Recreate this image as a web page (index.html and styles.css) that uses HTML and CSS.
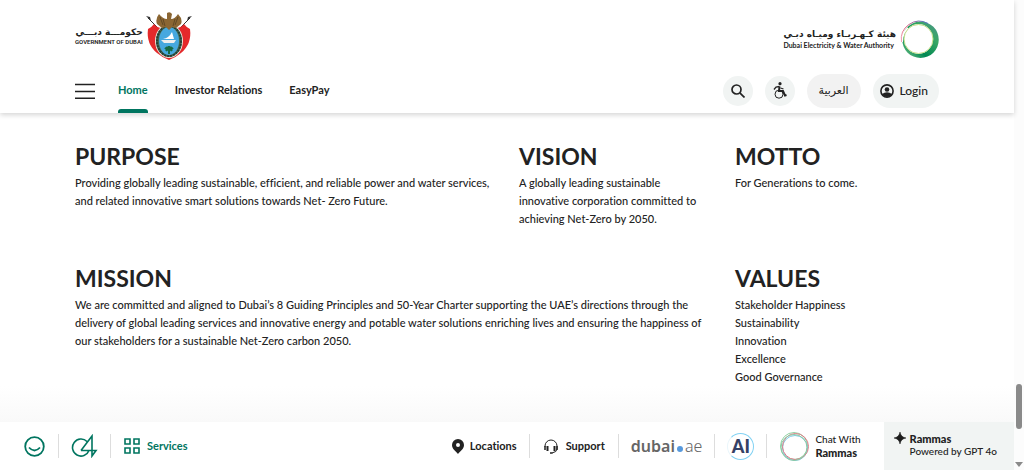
FILE: index.html
```html
<!DOCTYPE html>
<html lang="en">
<head>
<meta charset="utf-8">
<meta name="viewport" content="width=device-width, initial-scale=1">
<title>Dubai Electricity &amp; Water Authority</title>
<link rel="stylesheet" href="styles.css">
</head>
<body>
<div class="page">
  <div class="view">
    <header class="header">
      <div class="brands">
        <a class="brand" href="#">
          <span class="gov-text"><span class="gov-ar" lang="ar" dir="rtl">حكومـــة دبـــي</span><span class="gov-en">GOVERNMENT OF DUBAI</span></span>
          <svg class="crest" width="46" height="48" viewBox="0 0 46 48" aria-hidden="true">
            <path d="M2 6 13 17M44 6 33 17" stroke="#333" stroke-width="1"/>
            <path d="M0 4l4 1 1 4zM46 4l-4 1-1 4z" fill="#333"/>
            <path d="M2 17q3-1 6-5 3 4 8 4h14q5 0 8-4 3 4 6 5 2 15-9 24-6 5-12 7-6-2-12-7Q0 32 2 17z" fill="#e4292b"/>
            <ellipse cx="23" cy="29" rx="14" ry="17" fill="#e9e2d8"/>
            <ellipse cx="23" cy="29" rx="13" ry="16" fill="#426b54"/>
            <ellipse cx="23" cy="29" rx="12" ry="15" fill="none" stroke="#253d36" stroke-width="2" stroke-dasharray="2 1"/>
            <ellipse cx="23" cy="29" rx="10" ry="14" fill="#46a8df"/>
            <path d="M17 27q6-1 9-7l2 7z" fill="#fff"/><path d="M15 28h15l-2 3H18z" fill="#eee"/>
            <path d="M23 34v8M19 37q4-4 8 0M20 39q3-4 6 0" stroke="#176b45" stroke-width="2" fill="none"/>
            <path d="M21 1q3-2 5 1l-1 5q4 0 7-5 5 5 3 10l-5 4-4-1-3 3-3-3-4 1-5-4q-2-5 2-10 4 5 8 5z" fill="#8b6633"/>
            <path d="M14 5l3 8M17 7l2 7M32 5l-3 8M29 7l-2 7" stroke="#614925" stroke-width="1"/>
          </svg>
        </a>
        <a class="brand dewa" href="#">
          <span class="dewa-text"><span class="dewa-ar" lang="ar" dir="rtl">هيئة كـهـربـاء وميـاه دبـي</span><span class="dewa-en">Dubai Electricity &amp; Water Authority</span></span>
          <svg width="39" height="39" viewBox="0 0 39 39" aria-hidden="true">
            <defs>
              <linearGradient id="ring" x1="0" y1="1" x2="1" y2="0"><stop offset="0" stop-color="#7dc58c"/><stop offset=".35" stop-color="#008852"/><stop offset=".7" stop-color="#3aa765"/><stop offset="1" stop-color="#4b8f90"/></linearGradient>
              <linearGradient id="arc" x1="0" y1="1" x2="1" y2="0"><stop offset="0" stop-color="#f2a3b5"/><stop offset=".5" stop-color="#e05c80"/><stop offset="1" stop-color="#3f79c4"/></linearGradient>
            </defs>
            <path fill-rule="evenodd" fill="url(#ring)" d="M20.500 1.500a18 18 0 1 1 0 36.500 18 18 0 0 1 0-36.500zM18.500 4a14.500 15 0 1 0 0 30 14.500 15 0 0 0 0-30z"/>
            <path d="M2 22A17 18 0 0 1 8 8" stroke="#fff" stroke-width="2" fill="none"/>
            <path d="M1.500 22A18 18 0 0 1 28 3.500" stroke="url(#arc)" stroke-width="1" fill="none"/>
            <circle cx="18.500" cy="19" r="14.500" stroke="#c5df8a" stroke-width="1" fill="none"/>
          </svg>
        </a>
      </div>
      <div class="bar">
        <button class="menu" aria-label="Menu"><svg width="20" height="16" viewBox="0 0 20 16" stroke="#222" stroke-width="1.500"><path d="M0 1.500h20M0 8.500h20M0 15.200h20"/></svg></button>
        <nav class="nav" aria-label="Main">
          <a class="active" href="#">Home</a><a href="#">Investor Relations</a><a href="#">EasyPay</a>
        </nav>
        <div class="tools">
          <button class="round" aria-label="Search"><svg width="14" height="14" viewBox="0 0 14 14" fill="none" stroke="#222" stroke-width="1.700"><circle cx="5.500" cy="5.500" r="4.500"/><path d="M8.800 8.800 13.500 13.500"/></svg></button>
          <button class="round" aria-label="Accessibility"><svg width="14" height="17" viewBox="0 0 14 17" fill="none" stroke="#222"><circle cx="7" cy="1.700" r="1.600" fill="#222" stroke="none"/><path d="M6.500 4.500 6 9h4l2 4.500 1.500-.5" stroke-width="2"/><path d="M6.500 4.500 3 5 1 7.500M7.500 6l3 1" stroke-width="1.300"/><circle cx="6" cy="12.200" r="4" stroke-width="1"/></svg></button>
          <button class="pill arabic" lang="ar">العربية</button>
          <button class="pill login"><svg width="14" height="14" viewBox="0 0 14 14"><circle cx="7" cy="7" r="6.100" fill="none" stroke="#222" stroke-width="1.600"/><circle cx="7" cy="5.500" r="2.300" fill="#222"/><path d="M2 10q5-3.500 10 0-2 3-5 3t-5-3z" fill="#222"/></svg>Login</button>
        </div>
      </div>
    </header>
    <main class="main">
      <section><h2>PURPOSE</h2><p>Providing globally leading sustainable, efficient, and reliable power and water services, and related innovative smart solutions towards Net- Zero Future.</p></section>
      <section><h2>VISION</h2><p>A globally leading sustainable innovative corporation committed to achieving Net-Zero by 2050.</p></section>
      <section><h2>MOTTO</h2><p>For Generations to come.</p></section>
      <section class="wide"><h2>MISSION</h2><p>We are committed and aligned to Dubai’s 8 Guiding Principles and 50-Year Charter supporting the UAE’s directions through the delivery of global leading services and innovative energy and potable water solutions enriching lives and ensuring the happiness of our stakeholders for a sustainable Net-Zero carbon 2050.</p></section>
      <section><h2>VALUES</h2><ul><li>Stakeholder Happiness</li><li>Sustainability</li><li>Innovation</li><li>Excellence</li><li>Good Governance</li></ul></section>
    </main>
    <footer class="footer">
      <div class="left">
        <a class="happy" href="#" aria-label="Happiness"><svg width="21" height="21" viewBox="0 0 21 21" fill="none" stroke="#007560" stroke-width="1.800"><circle cx="10.500" cy="10.500" r="9.300"/><path d="M5 11.500q5.500 6 11 0"/></svg></a>
        <a class="four" href="#" aria-label="04"><svg width="27" height="24" viewBox="0 0 27 24" fill="none" stroke="#007560" stroke-width="1.600"><path d="M16 7.500a8.500 8.500 0 1 0 2 9M10 16.500 21 2v20l4-5.500H10"/></svg></a>
        <a class="services" href="#"><svg width="16" height="16" viewBox="0 0 16 16" fill="none" stroke="#007560" stroke-width="1.600"><path d="M1 1h5v5H1zM10 1h5v5h-5zM1 10h5v5H1zM10 10h5v5h-5z"/></svg>Services</a>
      </div>
      <div class="right">
        <a class="locations" href="#"><svg width="12" height="15" viewBox="0 0 12 15"><path fill-rule="evenodd" fill="#222" d="M6 0a6 6 0 0 1 6 6c0 4-4 6.500-6 9C4 12.500 0 10 0 6a6 6 0 0 1 6-6zm0 4a2 2 0 1 0 0 4 2 2 0 0 0 0-4z"/></svg>Locations</a>
        <a class="support" href="#"><svg width="14" height="15" viewBox="0 0 14 15" fill="none" stroke="#222"><path d="M1 8V7a6 6 0 0 1 12 0v3q0 3-5 4" stroke-width="1"/><path d="M3.500 7v5M10.500 7v5" stroke-width="2"/><path d="M1 7v4M13 7v4M6 14h2.500" stroke-width="1.500"/></svg>Support</a>
        <a class="dubai" href="#" aria-label="dubai.ae"><b>dubai</b><i></i><span>ae</span></a>
        <a class="ai" href="#" aria-label="AI"><span>AI</span></a>
        <a class="chat" href="#"><svg width="30" height="31" viewBox="0 0 30 31" fill="none"><circle cx="14" cy="15" r="13.500" stroke="#8fd3a2"/><circle cx="15" cy="17" r="12.500" stroke="#7fcbe6"/><circle cx="15.500" cy="15.500" r="13" stroke="#df7a86"/><circle cx="14" cy="16.500" r="13" stroke="#8bc9a5"/></svg><span class="label"><span>Chat With</span><b>Rammas</b></span></a>
        <a class="gpt" href="#"><svg width="12" height="12" viewBox="0 0 12 12"><path d="M6 0q.8 5.200 6 6-5.200.8-6 6-.8-5.200-6-6 5.200-.8 6-6z" fill="#1d1d1d" stroke="#1d1d1d" stroke-width=".5"/></svg><b>Rammas</b><span>Powered by GPT 4o</span></a>
      </div>
    </footer>
  </div>
  <div class="scroll" aria-hidden="true"><span class="thumb"></span><span class="arrow"></span></div>
</div>
</body>
</html>
```
FILE: styles.css
```css
* { box-sizing: border-box; }
body {
  margin: 0;
  background: #fff;
  color: #222;
  font: 500 11px/18px Lato, "DejaVu Sans", sans-serif;
  font-variant-ligatures: no-common-ligatures;
}
a { color: inherit; text-decoration: none; }
button { border: 0; padding: 0; font: inherit; color: inherit; cursor: pointer; }
svg { display: block; flex: none; }
h2, p, ul { margin: 0; padding: 0; }
li { list-style: none; }

.page { display: flex; min-height: 100vh; }
.view { flex: 1; min-width: 0; display: flex; flex-direction: column; }

.header { position: relative; z-index: 1; padding: 12px 75px 0; background: #fff; box-shadow: 0 2px 5px rgba(0, 0, 0, .17); }
.brands { display: flex; justify-content: space-between; align-items: center; }
.brand { display: flex; align-items: center; gap: 3px; }
.gov-text, .dewa-text { display: flex; flex-direction: column; white-space: nowrap; }
.gov-ar { font: 700 9px/11px "DejaVu Sans", sans-serif; }
.gov-en { font: 600 6px/8px Roboto, sans-serif; }
.dewa { margin-top: 6px; gap: 4px; }
.dewa-ar { font: 700 9px/12px "DejaVu Sans", sans-serif; }
.dewa-en { font: 700 7px/10px Lato, sans-serif; }

.bar { display: flex; align-items: stretch; height: 53px; }
.menu { align-self: center; background: none; margin-top: 8px; }
.nav { display: flex; gap: 27px; margin-left: 23px; font-weight: 700; }
.nav a { padding-top: 21px; }
.nav .active { color: #007560; display: flex; flex-direction: column; justify-content: space-between; }
.nav .active::after { content: ""; height: 4px; background: #007560; border-radius: 3px 3px 0 0; }
.tools { display: flex; align-items: center; gap: 12px; margin-left: auto; padding-top: 8px; }
.round { display: grid; place-items: center; width: 30px; height: 30px; border-radius: 50%; background: #f1f4f3; }
.pill { height: 34px; border-radius: 17px; background: #f1f4f3; }
.arabic { width: 54px; background: #f2f2f2; font: 11px/18px "DejaVu Sans", sans-serif; }
.login { display: flex; align-items: center; gap: 6px; padding: 0 11px 0 7px; font-size: 12px; }

.main {
  flex: 1;
  display: grid;
  grid-template-columns: 444fr 216fr 204fr;
  align-content: start;
  row-gap: 36px;
  padding: 29px 75px;
  background: linear-gradient(#fff calc(100% - 36px), #f9f9f9);
}
.wide { grid-column: span 2; }
.main h2 { font-size: 23px; line-height: 28px; font-weight: 700; margin-bottom: 4px; }
.main p { padding-right: 24px; }

.footer { display: flex; justify-content: space-between; min-height: 48px; background: #fff; font-weight: 700; white-space: nowrap; }
.left, .right { display: flex; align-items: center; }
.left { padding-left: 24px; }
.left a, .right a { display: flex; align-items: center; height: 24px; }
.left a + a, .right a + a { border-left: 1px solid #ddd; }
.happy { width: 34px; }
.left .four { width: 52px; padding-left: 12px; }
.services { gap: 7px; padding-left: 13px; color: #007560; }
.locations { gap: 6px; padding-right: 12px; }
.support { gap: 8px; padding: 0 13px 0 14px; }
.dubai { padding: 0 12px; gap: 2px; color: #666; font-family: "Noto Sans", sans-serif; font-size: 16px; }
.dubai b { font-weight: 600; }
.dubai span { font-weight: 300; }
.dubai i { width: 6px; height: 6px; border-radius: 50%; background: #5799dc; margin-top: 5px; }
.ai { padding: 0 12px; }
.ai span { display: grid; place-items: center; width: 27px; height: 27px; border: 1px solid #82d2f3; border-left-color: #eaf6fb; border-radius: 50%; color: #354166; font-size: 18px; font-weight: 900; }
.chat { gap: 5px; padding: 0 23px 0 13px; }
.label { display: flex; flex-direction: column; line-height: 13px; }
.label span { font-size: 10px; font-weight: 500; }
.right .gpt { display: grid; grid-template-columns: 12px auto; align-content: center; align-items: center; column-gap: 4px; height: auto; align-self: stretch; padding: 0 17px 3px 10px; border: 0; background: #f1f4f3; line-height: 13px; }
.gpt span { grid-column: 2; font-weight: 500; font-size: 10px; }

.scroll { flex: none; width: 10px; background: #fcfcfc; display: flex; flex-direction: column; align-items: center; justify-content: flex-end; gap: 33px; padding-bottom: 3px; }
.thumb { width: 6px; height: 45px; border-radius: 3px; background: #8a8a8a; }
.arrow { border: 4px solid transparent; border-top: 5px solid #8a8a8a; border-bottom: 0; }
```
